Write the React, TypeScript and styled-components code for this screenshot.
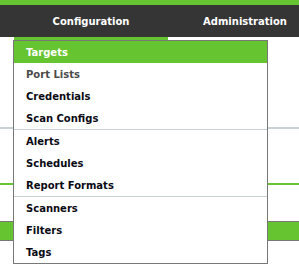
import React from "react";
import styled, { createGlobalStyle } from "styled-components";

const Colors = {
    green: "#66c430",
    dark: "#363535",
    border: "#787878",
    rule: "#c8d2d5",
    text: "#0a0a14",
    muted: "#4a4a4a",
};

const GlobalStyle = createGlobalStyle`
    html, body {
        margin: 0;
        padding: 0;
        background: #ffffff;
        font-family: "DejaVu Sans", "Liberation Sans", sans-serif;
        overflow: hidden;
    }
`;

const Page = styled.div`
    width: 299px;
    height: 268px;
    position: relative;
    overflow: hidden;
`;

const TopStrip = styled.div`
    height: 5px;
    background: ${Colors.green};
`;

const NavBar = styled.nav`
    height: 32px;
    background: ${Colors.dark};
    display: flex;
    flex-direction: row;
    padding-left: 14px;
`;

const Tab = styled.div<{ $active?: boolean }>`
    position: relative;
    flex: 0 0 154px;
    display: flex;
    align-items: center;
    justify-content: center;
    color: #ffffff;
    font-weight: bold;
    font-size: 10px;
    white-space: nowrap;
    box-shadow: ${(p) => (p.$active ? `0 3px 0 ${Colors.green}` : "none")};
`;

const Content = styled.div`
    display: flex;
    flex-direction: column;
`;

const Divider = styled.div`
    height: 2px;
    margin-top: 90px;
    background: ${Colors.rule};
`;

const GreenRule = styled.div`
    height: 2px;
    margin-top: 54px;
    background: ${Colors.green};
`;

const GreenBox = styled.div`
    height: 18px;
    margin-top: 36px;
    background: ${Colors.green};
    border-top: 1px solid ${Colors.border};
    border-bottom: 1px solid ${Colors.border};
`;

const Menu = styled.ul`
    position: absolute;
    top: 35px;
    left: -1px;
    width: 253px;
    margin: 0;
    padding: 0;
    list-style: none;
    background: #ffffff;
    border: 1px solid ${Colors.border};
    z-index: 10;
`;

const MenuItem = styled.li<{ $active?: boolean; $muted?: boolean; $separated?: boolean }>`
    height: 22px;
    display: flex;
    align-items: center;
    padding-left: 12px;
    font-size: 10px;
    font-weight: bold;
    color: ${(p) => (p.$active ? "#ffffff" : p.$muted ? Colors.muted : Colors.text)};
    background: ${(p) => (p.$active ? Colors.green : "transparent")};
    border-top: ${(p) => (p.$separated ? `1px solid ${Colors.rule}` : "none")};
`;

const items = [
    { label: "Targets", active: true },
    { label: "Port Lists", muted: true },
    { label: "Credentials" },
    { label: "Scan Configs" },
    { label: "Alerts", separated: true },
    { label: "Schedules" },
    { label: "Report Formats" },
    { label: "Scanners", separated: true },
    { label: "Filters" },
    { label: "Tags" },
];

export default function App() {
    return (
        <Page>
            <GlobalStyle />
            <TopStrip />
            <NavBar>
                <Tab $active>
                    Configuration
                    <Menu>
                        {items.map((item) => (
                            <MenuItem
                                key={item.label}
                                $active={item.active}
                                $muted={item.muted}
                                $separated={item.separated}
                            >
                                {item.label}
                            </MenuItem>
                        ))}
                    </Menu>
                </Tab>
                <Tab>Administration</Tab>
            </NavBar>
            <Content>
                <Divider />
                <GreenRule />
                <GreenBox />
            </Content>
        </Page>
    );
}
